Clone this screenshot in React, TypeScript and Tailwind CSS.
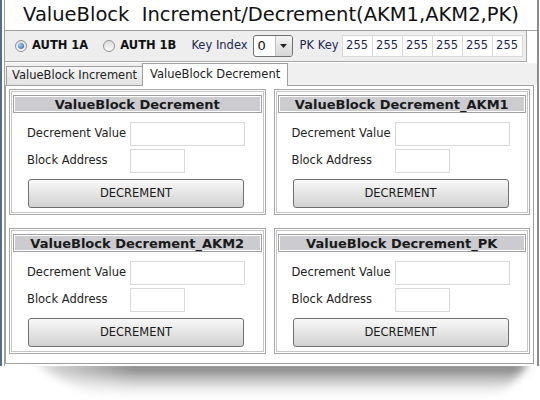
const font = "font-['DejaVu_Sans',Verdana,sans-serif]";

function Radio({ on }: { on: boolean }) {
  return (
    <span className="w-[12px] h-[12px] rounded-full border border-[#8f9092] bg-gradient-to-b from-[#dcdcdc] to-[#fafafa] flex items-center justify-center shrink-0">
      {on && (
        <span className="w-[6px] h-[6px] rounded-full bg-[radial-gradient(circle_at_35%_35%,#a8d0f5,#1d56a3)]" />
      )}
    </span>
  );
}

function Box({ title }: { title: string }) {
  return (
    <div className="border border-[#a8a8a8] p-px">
      <div className="border border-[#c6c6c6] px-px pt-[3px] pb-[4px]">
        <div className="h-[18px] border border-[#a0a0a0] shadow-[inset_0_0_0_1px_#ffffff] bg-[#cbcbd0] flex items-center justify-center text-[13px] font-bold text-[#1a1a1a] leading-none">
          {title}
        </div>
        <div className="mt-[9px] flex items-center pl-[14px] h-[24px]">
          <span className="w-[103px] whitespace-nowrap text-[11.5px] text-[#222]">Decrement Value</span>
          <div className="w-[115px] h-[24px] border border-[#d9d9d9] bg-white" />
        </div>
        <div className="mt-[3px] flex items-center pl-[14px] h-[24px]">
          <span className="w-[103px] whitespace-nowrap text-[11.5px] text-[#222]">Block Address</span>
          <div className="w-[55px] h-[24px] border border-[#d9d9d9] bg-white" />
        </div>
        <div className="mt-[6px] ml-[15px] w-[216px] h-[29px] rounded-[3px] border border-[#6f6f6f] bg-gradient-to-b from-[#f8f8f8] to-[#d2d2d2] flex items-center justify-center text-[11.5px] text-[#1a1a1a]">
          DECREMENT
        </div>
      </div>
    </div>
  );
}

export default function App() {
  return (
    <div className={`w-[540px] h-[400px] bg-white overflow-hidden ${font}`}>
      <div className="w-[539px] h-[366px] flex border-l-2 border-[#4f6f8f] border-r-2 border-r-[#8c8c8c]">
        <div className="w-[2px]" />
        <div className="flex-1 flex flex-col border-l border-[#a0a0a0]">
          {/* title */}
          <div className="h-[31px] shrink-0 border-b border-[#a0a0a0] flex items-center justify-center">
            <span className="whitespace-pre text-[19.5px] text-[#111]">ValueBlock  Increment/Decrement(AKM1,AKM2,PK)</span>
          </div>

          {/* toolbar */}
          <div className="w-[522px] h-[31px] shrink-0 border-b border-r border-[#a8a8a8] bg-[#eeeeee] flex items-center pl-[10px] text-[11.5px]">
            <Radio on />
            <span className="ml-[5px] font-bold text-[#111]">AUTH 1A</span>
            <span className="ml-[15px]"><Radio on={false} /></span>
            <span className="ml-[5px] font-bold text-[#111]">AUTH 1B</span>
            <span className="ml-[15px] text-[#1c2850]">Key Index</span>
            <div className="ml-[5px] w-[40px] h-[22px] rounded-[3px] border border-[#707070] bg-white flex overflow-hidden">
              <span className="flex-1 pl-[4px] flex items-center text-[13px] text-[#111]">0</span>
              <span className="w-[17px] border-l border-[#c0c0c0] bg-gradient-to-b from-[#f4f4f4] to-[#d6d6d6] flex items-center justify-center">
                <svg width="7" height="4" viewBox="0 0 7 4"><path d="M0 0h7L3.5 4z" fill="#222" /></svg>
              </span>
            </div>
            <span className="ml-[7px] text-[#1c2850]">PK Key</span>
            <div className="ml-[3px] flex">
              {[0, 1, 2, 3, 4, 5].map((i) => (
                <div
                  key={i}
                  className="w-[31px] h-[22px] border border-[#d8d8d8] -ml-px first:ml-0 bg-white flex items-center justify-center text-[11.5px] text-[#1c2850]"
                >
                  255
                </div>
              ))}
            </div>
          </div>

          {/* tabs */}
          <div className="h-[22px] shrink-0 mt-px bg-[#f0f0f0] flex items-end pl-px text-[11.5px] relative z-10">
            <div className="h-[19px] px-[5px] border border-b-0 border-[#a0a0a0] bg-gradient-to-b from-[#f6f6f6] to-[#e2e2e2] flex items-center text-[#222]">
              ValueBlock Increment
            </div>
            <div className="h-[23px] -mb-px -ml-px px-[7px] border border-b-0 border-[#a0a0a0] bg-white flex items-center text-[#222]">
              ValueBlock Decrement
            </div>
          </div>

          {/* panel */}
          <div className="flex-1 w-[529px] border border-[#a0a0a0] bg-white pt-[3px] px-[3px] grid grid-cols-2 content-start gap-x-[8px] gap-y-[13px]">
            <Box title="ValueBlock Decrement" />
            <Box title="ValueBlock Decrement_AKM1" />
            <Box title="ValueBlock Decrement_AKM2" />
            <Box title="ValueBlock Decrement_PK" />
          </div>
          <div className="h-[2px] shrink-0" />
        </div>
      </div>

      {/* drop shadow */}
      <svg width="540" height="34" viewBox="0 0 540 34" className="block">
        <defs>
          <linearGradient id="sh" x1="0" y1="0" x2="0" y2="1">
            <stop offset="0" stopColor="#444444" stopOpacity="0.85" />
            <stop offset="0.5" stopColor="#888888" stopOpacity="0.45" />
            <stop offset="1" stopColor="#ffffff" stopOpacity="0" />
          </linearGradient>
          <linearGradient id="sx" x1="0" y1="0" x2="1" y2="0">
            <stop offset="0" stopColor="#ffffff" stopOpacity="1" />
            <stop offset="0.25" stopColor="#ffffff" stopOpacity="0" />
            <stop offset="1" stopColor="#ffffff" stopOpacity="0" />
          </linearGradient>
          <filter id="bl" x="-10%" y="-50%" width="120%" height="200%">
            <feGaussianBlur stdDeviation="4" />
          </filter>
        </defs>
        <path d="M35 -4 Q80 36 170 34 L470 34 Q510 30 528 -4 Z" fill="url(#sh)" filter="url(#bl)" />
        <rect x="0" y="0" width="540" height="34" fill="url(#sx)" />
      </svg>
    </div>
  );
}
